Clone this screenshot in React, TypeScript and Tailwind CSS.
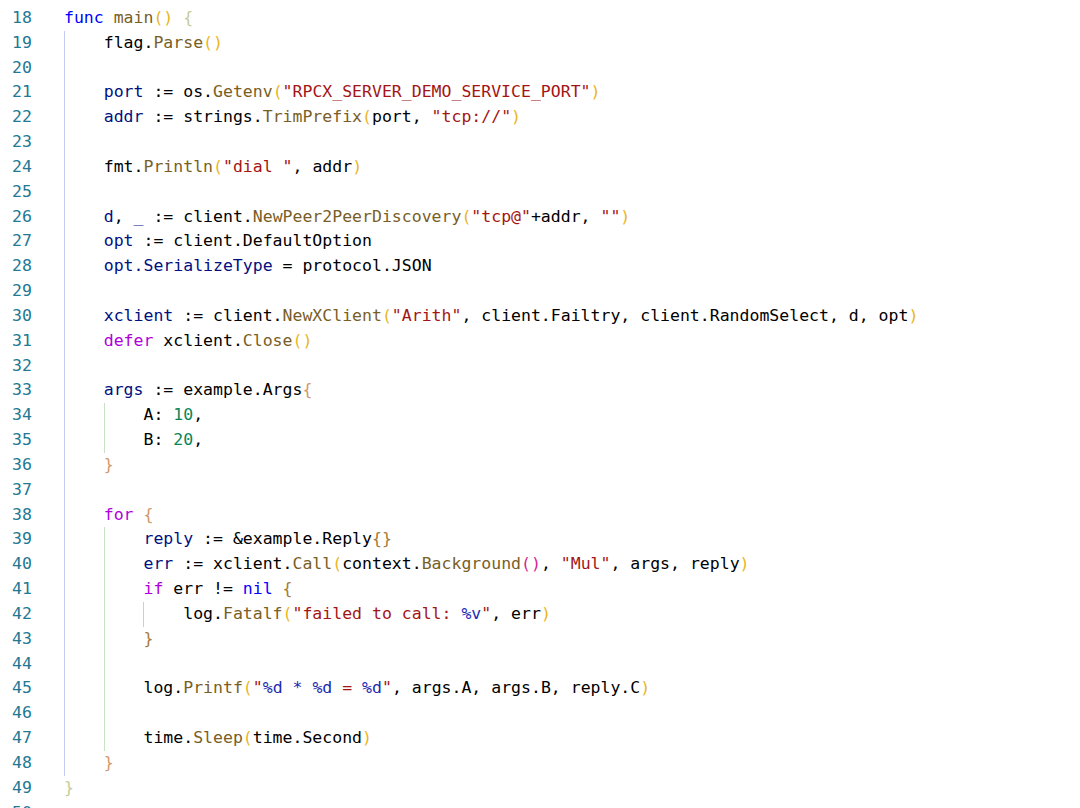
type Kind = "t" | "kw" | "ck" | "v" | "fn" | "s" | "n" | "f" | "p1" | "p2" | "b1" | "b2" | "b3";
type Tok = [Kind, string];

const tone: Record<Kind, string> = {
  t: "text-[#000000]",
  kw: "text-[#0000ff]",
  ck: "text-[#af00db]",
  v: "text-[#001080]",
  fn: "text-[#795e26]",
  s: "text-[#a31515]",
  n: "text-[#098658]",
  f: "text-[#1a2ab0]",
  p1: "text-[#eab522]",
  p2: "text-[#d6248f]",
  b1: "text-[#c5cc98]",
  b2: "text-[#d3996a]",
  b3: "text-[#a77b36]",
};

const guides = ["border-[#c5cbf4]", "border-[#c8e3c4]", "border-[#dfc9b9]"];

const lines: { n: number; d: number; toks: Tok[] }[] = [
  { n: 18, d: 0, toks: [["kw", "func"], ["t", " "], ["fn", "main"], ["p1", "()"], ["t", " "], ["b1", "{"]] },
  { n: 19, d: 1, toks: [["t", "flag."], ["fn", "Parse"], ["p1", "()"]] },
  { n: 20, d: 1, toks: [] },
  { n: 21, d: 1, toks: [["v", "port"], ["t", " := os."], ["fn", "Getenv"], ["p1", "("], ["s", "\"RPCX_SERVER_DEMO_SERVICE_PORT\""], ["p1", ")"]] },
  { n: 22, d: 1, toks: [["v", "addr"], ["t", " := strings."], ["fn", "TrimPrefix"], ["p1", "("], ["t", "port, "], ["s", "\"tcp://\""], ["p1", ")"]] },
  { n: 23, d: 1, toks: [] },
  { n: 24, d: 1, toks: [["t", "fmt."], ["fn", "Println"], ["p1", "("], ["s", "\"dial \""], ["t", ", addr"], ["p1", ")"]] },
  { n: 25, d: 1, toks: [] },
  { n: 26, d: 1, toks: [["v", "d"], ["t", ", "], ["v", "_"], ["t", " := client."], ["fn", "NewPeer2PeerDiscovery"], ["p1", "("], ["s", "\"tcp@\""], ["t", "+addr, "], ["s", "\"\""], ["p1", ")"]] },
  { n: 27, d: 1, toks: [["v", "opt"], ["t", " := client.DefaultOption"]] },
  { n: 28, d: 1, toks: [["v", "opt.SerializeType"], ["t", " = protocol.JSON"]] },
  { n: 29, d: 1, toks: [] },
  { n: 30, d: 1, toks: [["v", "xclient"], ["t", " := client."], ["fn", "NewXClient"], ["p1", "("], ["s", "\"Arith\""], ["t", ", client.Failtry, client.RandomSelect, d, opt"], ["p1", ")"]] },
  { n: 31, d: 1, toks: [["ck", "defer"], ["t", " xclient."], ["fn", "Close"], ["p1", "()"]] },
  { n: 32, d: 1, toks: [] },
  { n: 33, d: 1, toks: [["v", "args"], ["t", " := example.Args"], ["b2", "{"]] },
  { n: 34, d: 2, toks: [["t", "A: "], ["n", "10"], ["t", ","]] },
  { n: 35, d: 2, toks: [["t", "B: "], ["n", "20"], ["t", ","]] },
  { n: 36, d: 1, toks: [["b2", "}"]] },
  { n: 37, d: 1, toks: [] },
  { n: 38, d: 1, toks: [["ck", "for"], ["t", " "], ["b2", "{"]] },
  { n: 39, d: 2, toks: [["v", "reply"], ["t", " := &example.Reply"], ["b3", "{}"]] },
  { n: 40, d: 2, toks: [["v", "err"], ["t", " := xclient."], ["fn", "Call"], ["p1", "("], ["t", "context."], ["fn", "Background"], ["p2", "()"], ["t", ", "], ["s", "\"Mul\""], ["t", ", args, reply"], ["p1", ")"]] },
  { n: 41, d: 2, toks: [["ck", "if"], ["t", " err != "], ["kw", "nil"], ["t", " "], ["b3", "{"]] },
  { n: 42, d: 3, toks: [["t", "log."], ["fn", "Fatalf"], ["p1", "("], ["s", "\"failed to call: "], ["f", "%v"], ["s", "\""], ["t", ", err"], ["p1", ")"]] },
  { n: 43, d: 2, toks: [["b3", "}"]] },
  { n: 44, d: 2, toks: [] },
  { n: 45, d: 2, toks: [["t", "log."], ["fn", "Printf"], ["p1", "("], ["s", "\""], ["f", "%d"], ["s", " "], ["f", "*"], ["s", " "], ["f", "%d"], ["s", " = "], ["f", "%d"], ["s", "\""], ["t", ", args.A, args.B, reply.C"], ["p1", ")"]] },
  { n: 46, d: 2, toks: [] },
  { n: 47, d: 2, toks: [["t", "time."], ["fn", "Sleep"], ["p1", "("], ["t", "time.Second"], ["p1", ")"]] },
  { n: 48, d: 1, toks: [["b2", "}"]] },
  { n: 49, d: 0, toks: [["b1", "}"]] },
  { n: 50, d: 0, toks: [] },
];

export default function App() {
  return (
    <div className="w-[1080px] h-[808px] overflow-hidden bg-white pt-[6px] font-['DejaVu_Sans_Mono',monospace] text-[16.5px] leading-[24.84px]">
      {lines.map((l) => (
        <div key={l.n} className="flex h-[24.84px] whitespace-pre">
          <span className="w-[64px] shrink-0 pl-[12px] text-[#237893]">{l.n}</span>
          <span className="flex">
            {Array.from({ length: l.d }).map((_, i) => (
              <span key={i} className={`inline-block w-[4ch] h-[24.84px] border-l ${guides[i]}`} />
            ))}
            {l.toks.map(([k, s], i) => (
              <span key={i} className={tone[k]}>{s}</span>
            ))}
          </span>
        </div>
      ))}
    </div>
  );
}
